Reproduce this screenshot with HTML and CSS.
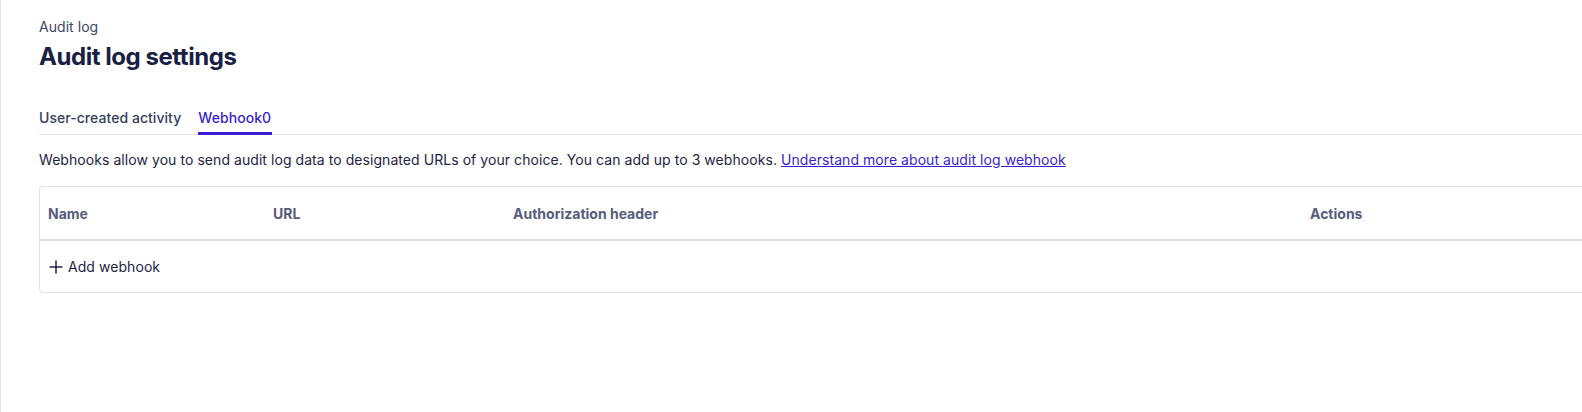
FILE: index.html
```html
<!DOCTYPE html>
<html lang="en">
<head>
<meta charset="utf-8">
<title>Audit log settings</title>
<link rel="stylesheet" href="styles.css">
</head>
<body>
<div class="frame">
  <main class="page">
    <div class="breadcrumb">Audit log</div>
    <h1 class="title">Audit log settings</h1>
    <nav class="tabs">
      <div class="tab">User-created activity</div>
      <div class="tab tab-active">Webhook0</div>
    </nav>
    <p class="desc">Webhooks allow you to send audit log data to designated URLs of your choice. You can add up to 3 webhooks. <a class="link" href="#">Understand more about audit log webhook</a></p>
    <div class="table">
      <div class="thead">
        <div class="th">Name</div>
        <div class="th">URL</div>
        <div class="th">Authorization header</div>
        <div class="th">Actions</div>
      </div>
      <div class="trow">
        <div class="add">
          <svg class="plus" width="14" height="14" viewBox="0 0 14 14" aria-hidden="true"><path d="M7 0.5V13.5M0.5 7H13.5" stroke="#1e2444" stroke-width="1.5" fill="none"/></svg>
          <span>Add webhook</span>
        </div>
      </div>
    </div>
  </main>
</div>
</body>
</html>
```
FILE: styles.css
```css
html, body {
  margin: 0;
  padding: 0;
  background: #ffffff;
  overflow: hidden;
}
body {
  font-family: Inter, "Noto Sans", "Liberation Sans", sans-serif;
  color: #1e2444;
  width: 1582px;
  height: 412px;
}
.frame {
  height: 412px;
  border-left: 1px solid #e4e4e6;
  box-sizing: border-box;
}
.page {
  padding: 17px 0 0 38px;
  width: 1620px;
}
.breadcrumb {
  font-size: 14px;
  line-height: 20px;
  color: #3d4563;
  letter-spacing: 0.05px;
}
.title {
  margin: 6px 0 0;
  font-size: 24px;
  line-height: 28px;
  font-weight: 700;
  color: #1a2044;
  letter-spacing: -0.45px;
}
.tabs {
  display: flex;
  gap: 17px;
  margin-top: 37px;
  border-bottom: 1px solid #e6e7ea;
}
.tab {
  font-size: 14px;
  line-height: 20px;
  font-weight: 500;
  color: #363e5c;
  padding-bottom: 4px;
  margin-bottom: -1px;
  border-bottom: 3px solid transparent;
  letter-spacing: 0.05px;
}
.tab-active {
  color: #3a1fd1;
  border-bottom-color: #3a1fd1;
  padding-right: 1px;
}
.desc {
  margin: 15px 0 0;
  font-size: 14px;
  line-height: 20px;
  color: #1e2444;
  letter-spacing: 0.06px;
}
.link {
  color: #3a1fd1;
  text-decoration: underline;
}
.table {
  margin-top: 16px;
  border: 1px solid #e1e2e6;
  border-radius: 4px;
}
.thead {
  display: grid;
  grid-template-columns: 225px 240px 797px 1fr;
  padding-left: 8px;
  height: 52px;
  align-items: center;
  border-bottom: 2px solid #dcdde3;
}
.th {
  font-size: 14px;
  font-weight: 700;
  color: #565d7c;
}
.trow {
  height: 51px;
  display: flex;
  align-items: center;
  padding-left: 9px;
}
.add {
  display: flex;
  align-items: center;
  gap: 5px;
  font-size: 14px;
  color: #1e2444;
  letter-spacing: 0.06px;
}
.plus {
  display: block;
}
```
